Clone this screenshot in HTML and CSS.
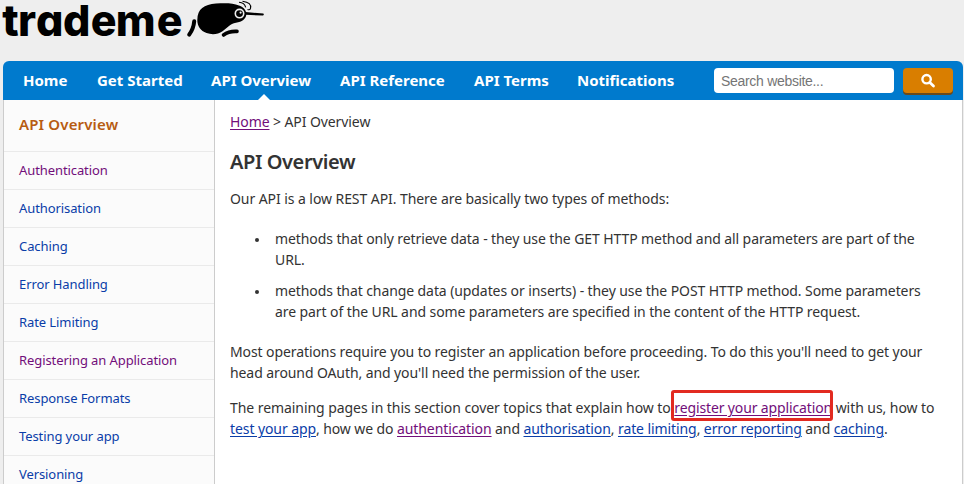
FILE: index.html
```
<!DOCTYPE html>
<html lang="en">
<head>
<meta charset="utf-8">
<title>API Overview</title>
<link rel="stylesheet" href="styles.css">
</head>
<body>
<header class="brand">
  <svg class="logo" width="270" height="56" viewBox="0 0 270 56" role="img" aria-label="trademe">
    <text class="logo-text" x="2.3 18 36 63 90.700 115.700 156.800" y="35.700">trademe</text>
    <path d="M194.2 21.3 Q193.600 28.500 189.200 34.600" fill="none" stroke="#000" stroke-width="4" stroke-linecap="round"/>
    <path d="M197.300 20 C197.500 9 204 4.500 216 3.600 C225 3 233 3 239 5.500 C244.500 7.500 246.500 11 246.300 14.500 C246 19 242 21.800 236 22.800 C230 24 227 28 222.500 31.300 C218 34.400 212 35 206.500 33 C200.500 30.800 197.300 26 197.300 20 Z"/>
    <path d="M245.500 12 L263.300 13.600 Q264.500 14.800 263 15.500 L245.500 14.800 Z"/>
    <path d="M223.500 35 Q229 30.900 237 31.400" fill="none" stroke="#000" stroke-width="3.600" stroke-linecap="round"/>
    <path d="M239 2.200 Q244.500 2.500 245.700 7.300 M242.500 1.200 Q252 2.500 250.500 8.500 Q249.800 10.300 247.500 9.500" fill="none" stroke="#000" stroke-width="1.100"/>
    <circle cx="239.500" cy="13.600" r="4.200" fill="#000" stroke="#eee" stroke-width="1.600"/>
    <circle cx="240.600" cy="12.600" r="1.100" fill="#eee"/>
  </svg>
</header>
<div class="page">
  <nav class="nav">
    <a class="nav-item">Home</a>
    <a class="nav-item">Get Started</a>
    <a class="nav-item nav-current">API Overview</a>
    <a class="nav-item">API Reference</a>
    <a class="nav-item">API Terms</a>
    <a class="nav-item">Notifications</a>
    <form class="search">
      <input class="search-input" type="text" placeholder="Search website..." aria-label="Search">
      <button class="search-button" type="button" aria-label="Search">
        <svg width="16" height="16" viewBox="0 0 16 16"><circle cx="6.600" cy="6.200" r="4.200" fill="none" stroke="#fff" stroke-width="2.400"/><path d="M9.800 9.400 L13.500 13" stroke="#fff" stroke-width="2.800" stroke-linecap="round"/></svg>
      </button>
    </form>
  </nav>
  <div class="columns">
    <aside class="sidebar">
      <h2 class="side-title">API Overview</h2>
      <a class="side-link visited">Authentication</a>
      <a class="side-link">Authorisation</a>
      <a class="side-link">Caching</a>
      <a class="side-link">Error Handling</a>
      <a class="side-link">Rate Limiting</a>
      <a class="side-link visited">Registering an Application</a>
      <a class="side-link">Response Formats</a>
      <a class="side-link">Testing your app</a>
      <a class="side-link">Versioning</a>
    </aside>
    <main class="content">
      <div class="crumbs"><a class="link visited">Home</a> &gt; API Overview</div>
      <h1 class="title">API Overview</h1>
      <p class="intro">Our API is a low REST API. There are basically two types of methods:</p>
      <ul class="methods">
        <li>methods that only retrieve data - they use the GET HTTP method and all parameters are part of the<br>URL.</li>
        <li>methods that change data (updates or inserts) - they use the POST HTTP method. Some parameters<br>are part of the URL and some parameters are specified in the content of the HTTP request.</li>
      </ul>
      <p>Most operations require you to register an application before proceeding. To do this you'll need to get your<br>head around OAuth, and you'll need the permission of the user.</p>
      <p><span class="lead">The remaining pages in this section cover topics that explain how to <span class="marked"><a class="link visited">register your application</a></span> with us, how to</span><br><span class="topics"><a class="link">test your app</a>, how we do <a class="link visited">authentication</a> and <a class="link">authorisation</a>, <a class="link">rate limiting</a>, <a class="link">error reporting</a> and <a class="link">caching</a>.</span></p>
    </main>
  </div>
</div>
</body>
</html>
```
FILE: styles.css
```
*, *::before, *::after { box-sizing: border-box; }

body {
  margin: 0;
  height: 484px;
  overflow: hidden;
  background: #eee;
  color: #333;
  font: 14px/21px "Noto Sans", sans-serif;
  letter-spacing: -0.09px;
}

.brand { height: 61px; }
.logo { display: block; overflow: visible; }
.logo-text {
  font: 800 43px "Inter", sans-serif;
  font-feature-settings: "cv11";
  letter-spacing: 0;
}

.page { width: 960px; margin-left: 3px; }

.nav {
  display: grid;
  grid-template-columns: 74px 114px 129px 134px 103px 137px auto;
  align-items: center;
  height: 39px;
  padding-left: 20px;
  background: #007acd;
  border-radius: 6px 6px 0 0;
}
.nav-item {
  color: #fff;
  font-size: 15px;
  font-weight: 700;
  line-height: 39px;
  letter-spacing: 0;
  white-space: nowrap;
}
.nav-current { position: relative; }
.nav-current::after {
  content: "";
  position: absolute;
  left: 47px;
  bottom: 0;
  border: 6px solid transparent;
  border-top: 0;
  border-bottom-color: #fff;
}

.search { display: flex; gap: 9px; height: 25px; }
.search-input {
  width: 180px;
  height: 25px;
  padding: 0 7px;
  border: 0;
  border-radius: 4px;
  background: #fff;
  font: 14px "Liberation Sans", sans-serif;
  letter-spacing: -0.3px;
}
.search-input::placeholder { color: #757575; }
.search-button {
  display: flex;
  align-items: center;
  justify-content: center;
  width: 50px;
  height: 25px;
  padding: 0;
  border: 0;
  border-radius: 4px;
  background: #d97e00;
  box-shadow: 0 2px 0 #6b4a1c;
}

.columns {
  display: grid;
  grid-template-columns: 211px 1fr;
  height: 384px;
  border: 1px solid #ccc;
  border-width: 0 1px;
  background: #fff;
}
.sidebar { background: #fbfbfb; border-right: 1px solid #ccc; overflow: hidden; }
.side-title {
  height: 51px;
  margin: 0;
  padding-left: 15px;
  color: #b75c12;
  font-size: 15px;
  font-weight: 600;
  line-height: 49px;
  letter-spacing: 0.15px;
}
.side-link {
  display: block;
  height: 38px;
  padding-left: 15px;
  border-top: 1px solid #eaeaea;
  color: #0a3da8;
  font-size: 13px;
  line-height: 37px;
}

.content { padding: 11px 15px 0; white-space: nowrap; }
.title {
  margin: 17px 0 13px;
  font-size: 20px;
  font-weight: 600;
  line-height: 26px;
  letter-spacing: -0.4px;
}
p { margin: 0 0 14px; }
.intro { letter-spacing: -0.07px; }
.methods { margin: 19px 0 19px; padding-left: 45px; list-style: none; }
.methods li { position: relative; margin-bottom: 10px; }
.methods li::before {
  content: "";
  position: absolute;
  left: -20px;
  top: 10px;
  width: 4px;
  height: 4px;
  border-radius: 50%;
  background: #333;
}

.link { color: #0a3da8; text-decoration: underline; text-underline-offset: 2px; }
.visited { color: #720e7a; }
.lead { letter-spacing: -0.065px; }
.topics { letter-spacing: -0.09px; }
.marked { position: relative; letter-spacing: -0.13px; }
.marked::after {
  content: "";
  position: absolute;
  left: -3px;
  top: -8px;
  width: 162px;
  height: 31px;
  border: 3px solid #e22a20;
  border-radius: 3px;
}
```
